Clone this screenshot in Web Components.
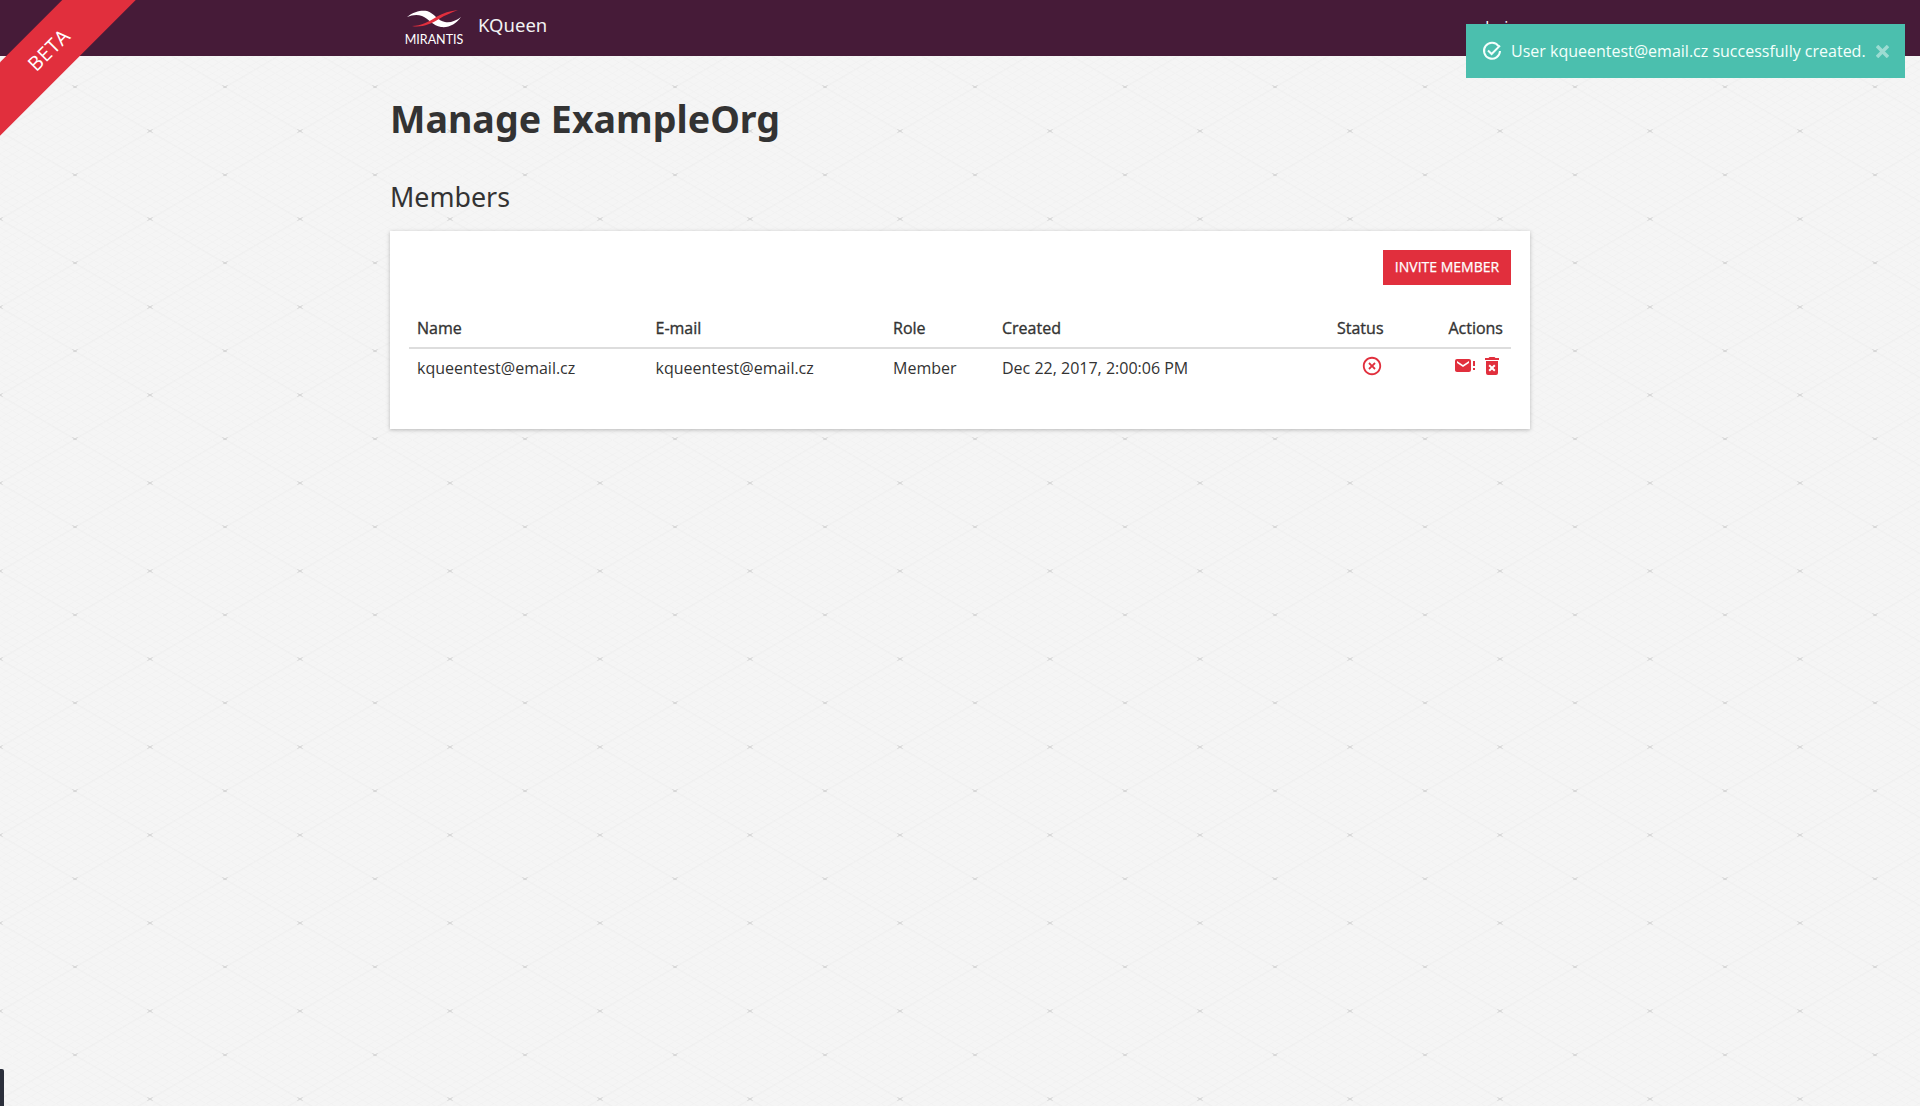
<!DOCTYPE html>
<html>
<head>
<meta charset="utf-8">
<title>KQueen</title>
<style>
  html, body { margin: 0; height: 100%; }
  body { font-family: "Open Sans", "Noto Sans", sans-serif; color: #333; }
</style>
</head>
<body>
<kq-app>
  <kq-header slot="header" user="admin" name="KQueen"></kq-header>
  <kq-ribbon slot="ribbon">BETA</kq-ribbon>
  <kq-toast slot="toast">User kqueentest@email.cz successfully created.</kq-toast>
  <kq-page heading="Manage ExampleOrg">
    <kq-card title="Members">
      <kq-button slot="actions">INVITE MEMBER</kq-button>
      <kq-members></kq-members>
    </kq-card>
  </kq-page>
</kq-app>

<script>
const ICONS = {
  closeCircle: 'M12,20C7.59,20 4,16.41 4,12C4,7.59 7.59,4 12,4C16.41,4 20,7.59 20,12C20,16.41 16.41,20 12,20M12,2C6.47,2 2,6.47 2,12C2,17.53 6.47,22 12,22C17.53,22 22,17.53 22,12C22,6.47 17.53,2 12,2M14.59,8L12,10.59L9.41,8L8,9.41L10.59,12L8,14.59L9.41,16L12,13.41L14.59,16L16,14.59L13.41,12L16,9.41L14.59,8Z',
  emailAlert: 'M16,9V7L10,11L4,7V9L10,13L16,9M16,5A2,2 0 0,1 18,7V16A2,2 0 0,1 16,18H4C2.89,18 2,17.1 2,16V7A2,2 0 0,1 4,5H16M20,12V7H22V12H20M20,16V14H22V16H20Z',
  deleteForever: 'M6,19A2,2 0 0,0 8,21H16A2,2 0 0,0 18,19V7H6V19M8.46,11.88L9.87,10.47L12,12.59L14.12,10.47L15.53,11.88L13.41,14L15.53,16.12L14.12,17.53L12,15.41L9.88,17.53L8.47,16.12L10.59,14L8.46,11.88M15.5,4L14.5,3H9.5L8.5,4H5V6H19V4H15.5Z'
};

function icon(name, size) {
  return `<svg width="${size}" height="${size}" viewBox="0 0 24 24" fill="currentColor"><path d="${ICONS[name]}"/></svg>`;
}

// faint isometric paper texture, one tile is 150x88
const grid = () => {
  let lines = '';
  for (let i = -12; i <= 12; i++) {
    const x = i * 12.5;
    lines += `M${x} 0L${x + 150} 88M${x} 88L${x + 150} 0`;
  }
  return `<svg xmlns='http://www.w3.org/2000/svg' width='150' height='88'>` +
    `<path d='${lines}' stroke='#f0f0f0' stroke-width='.6' fill='none'/>` +
    `<path d='M0 43L75 87L150 43L75 -1Z' stroke='#eeeeee' stroke-width='.7' fill='none'/>` +
    `<path d='M72.5 85.5L77.5 88.5M72.5 88.5L77.5 85.5M-2.5 41.5L2.5 44.5M-2.5 44.5L2.5 41.5M147.5 41.5L152.5 44.5M147.5 44.5L152.5 41.5' stroke='#d2d2d2' stroke-width='1' fill='none'/>` +
    `</svg>`;
};

class KqApp extends HTMLElement {
  connectedCallback() {
    const bg = encodeURIComponent(grid());
    this.attachShadow({ mode: 'open' }).innerHTML = `
      <style>
        :host {
          display: flex;
          flex-direction: column;
          height: 1106px;
          position: relative;
          overflow: hidden;
          background: #f5f5f5 url("data:image/svg+xml,${bg}") 0 0 repeat;
        }
        .dock {
          position: absolute;
          left: 0;
          bottom: 0;
          width: 4px;
          height: 37px;
          background: #2b2f3b;
          border-top-right-radius: 2px;
        }
      </style>
      <slot name="header"></slot>
      <slot></slot>
      <slot name="ribbon"></slot>
      <slot name="toast"></slot>
      <div class="dock"></div>
    `;
  }
}

class KqHeader extends HTMLElement {
  connectedCallback() {
    this.attachShadow({ mode: 'open' }).innerHTML = `
      <style>
        :host {
          display: block;
          height: 56px;
          background: #461b38;
          color: #fff;
        }
        .bar {
          width: 1140px;
          height: 100%;
          margin: 0 auto;
          display: flex;
          align-items: flex-start;
          justify-content: space-between;
        }
        .brand { display: flex; align-items: flex-start; margin-left: 15px; }
        .logo { display: flex; flex-direction: column; align-items: center; width: 58px; padding-top: 10px; }
        .logo svg { display: block; }
        .logo span { font: 400 12.5px/14px "Lato", sans-serif; margin-top: 5px; color: #fff; }
        .name { font: 400 18.5px/24px "Noto Sans", sans-serif; margin: 13px 0 0 15px; color: #f2f2f2; }
        .user { font-size: 16px; line-height: 20px; margin: 17px 12px 0 0; }
      </style>
      <div class="bar">
        <div class="brand">
          <div class="logo">
            <svg width="54" height="18" viewBox="0 0 54 18">
              <path d="M0 7C7 1 15 0 20 1C27 3 31 11 38 12C43 13 49 11 54 7C49 14 42 18 34 17C26 16 22 9 15 6C10 4 5 5 0 7Z" fill="#fff"/>
              <path d="M5 16C14 16 23 11 30 6.500C36 3 43 1 51 0C44 3 38 5 32 9C24 14 14 18 5 16Z" fill="#e12f3d"/>
            </svg>
            <span>MIRANTIS</span>
          </div>
          <div class="name">${this.getAttribute('name')}</div>
        </div>
        <div class="user">${this.getAttribute('user')}</div>
      </div>
    `;
  }
}

class KqRibbon extends HTMLElement {
  connectedCallback() {
    this.attachShadow({ mode: 'open' }).innerHTML = `
      <style>
        :host {
          position: absolute;
          top: 0;
          left: 0;
          width: 140px;
          height: 140px;
          overflow: hidden;
          display: block;
        }
        .band {
          position: absolute;
          left: -51px;
          top: 24px;
          width: 200px;
          height: 52px;
          transform: rotate(-45deg);
          background: #e12f3d;
          color: #fff;
          font: 400 20px/52px "Open Sans", sans-serif;
          letter-spacing: .5px;
          text-align: center;
        }
      </style>
      <div class="band"><slot></slot></div>
    `;
  }
}

class KqToast extends HTMLElement {
  connectedCallback() {
    this.attachShadow({ mode: 'open' }).innerHTML = `
      <style>
        :host {
          position: absolute;
          top: 24px;
          left: 1466px;
          width: 439px;
          height: 54px;
          box-sizing: border-box;
          display: flex;
          align-items: center;
          padding-left: 16px;
          background: #4bbfae;
          color: #f4fffc;
          font-size: 16px;
          white-space: nowrap;
        }
        svg { flex: none; }
        .text { margin-left: 9px; }
        .close { margin-left: 10px; font-size: 0; color: rgba(255,255,255,.45); }
      </style>
      <svg width="20" height="20" viewBox="0 0 20 20" fill="none" stroke="currentColor" stroke-width="2">
        <path d="M16.6 5.2A8 8 0 1 0 18 10"/>
        <path d="M6 9.500L9.600 13L18 4.600"/>
      </svg>
      <span class="text"><slot></slot></span>
      <span class="close">
        <svg width="13" height="13" viewBox="0 0 13 13" stroke="currentColor" stroke-width="3.500" fill="none"><path d="M1 1L12 12M12 1L1 12"/></svg>
      </span>
    `;
  }
}

class KqPage extends HTMLElement {
  connectedCallback() {
    this.attachShadow({ mode: 'open' }).innerHTML = `
      <style>
        :host { display: block; width: 1140px; margin: 0 auto; }
        h1 {
          margin: 39px 0 0;
          font: 700 37.6px/48px "Noto Sans", sans-serif;
          color: #333;
        }
      </style>
      <h1>${this.getAttribute('heading')}</h1>
      <slot></slot>
    `;
  }
}

class KqCard extends HTMLElement {
  connectedCallback() {
    this.attachShadow({ mode: 'open' }).innerHTML = `
      <style>
        :host { display: block; }
        h2 {
          margin: 36px 0 0;
          font: 400 26.800px/36px "Noto Sans", sans-serif;
          color: #333;
        }
        .card {
          margin-top: 16px;
          height: 198px;
          box-sizing: border-box;
          padding: 19px;
          background: #fff;
          box-shadow: 0 1px 4px rgba(0,0,0,.25);
        }
        .actions { display: flex; justify-content: flex-end; margin-bottom: 19px; }
      </style>
      <h2>${this.getAttribute('title')}</h2>
      <div class="card">
        <div class="actions"><slot name="actions"></slot></div>
        <slot></slot>
      </div>
    `;
  }
}

class KqButton extends HTMLElement {
  connectedCallback() {
    this.attachShadow({ mode: 'open' }).innerHTML = `
      <style>
        :host {
          display: inline-block;
          background: #e12f3d;
          color: #fff;
          font-size: 14px;
          -webkit-text-stroke: .25px #fff;
          line-height: 34px;
          height: 35px;
          width: 128px;
          text-align: center;
          white-space: nowrap;
        }
      </style>
      <slot></slot>
    `;
  }
}

class KqMembers extends HTMLElement {
  connectedCallback() {
    this.attachShadow({ mode: 'open' }).innerHTML = `
      <style>
        :host {
          display: grid;
          grid-template-columns: 238.5px 237.5px 109px 335px 86px 96px;
          font-size: 16px;
          color: #333;
        }
        .th {
          -webkit-text-stroke: .35px #333;
          padding: 12px 8px 7px;
          line-height: 24px;
          border-bottom: 2px solid #ddd;
        }
        .td {
          padding: 7px 8px;
          line-height: 24px;
          height: 24px;
          white-space: nowrap;
        }
        .right { text-align: right; }
        .status { color: #e12f3d; display: flex; justify-content: center; align-items: flex-start; padding: 6px 0; }
        .acts { color: #e12f3d; display: flex; justify-content: flex-end; gap: 3px; padding: 5px 7px 5px 0; }
        svg { display: block; }
      </style>
      <div class="th">Name</div>
      <div class="th">E-mail</div>
      <div class="th">Role</div>
      <div class="th">Created</div>
      <div class="th">Status</div>
      <div class="th right">Actions</div>
      <div class="td">kqueentest@email.cz</div>
      <div class="td">kqueentest@email.cz</div>
      <div class="td">Member</div>
      <div class="td">Dec 22, 2017, 2:00:06 PM</div>
      <div class="td status">${icon('closeCircle', 22)}</div>
      <div class="td acts">${icon('emailAlert', 24)}${icon('deleteForever', 24)}</div>
    `;
  }
}

customElements.define('kq-app', KqApp);
customElements.define('kq-header', KqHeader);
customElements.define('kq-ribbon', KqRibbon);
customElements.define('kq-toast', KqToast);
customElements.define('kq-page', KqPage);
customElements.define('kq-card', KqCard);
customElements.define('kq-button', KqButton);
customElements.define('kq-members', KqMembers);
</script>
</body>
</html>
